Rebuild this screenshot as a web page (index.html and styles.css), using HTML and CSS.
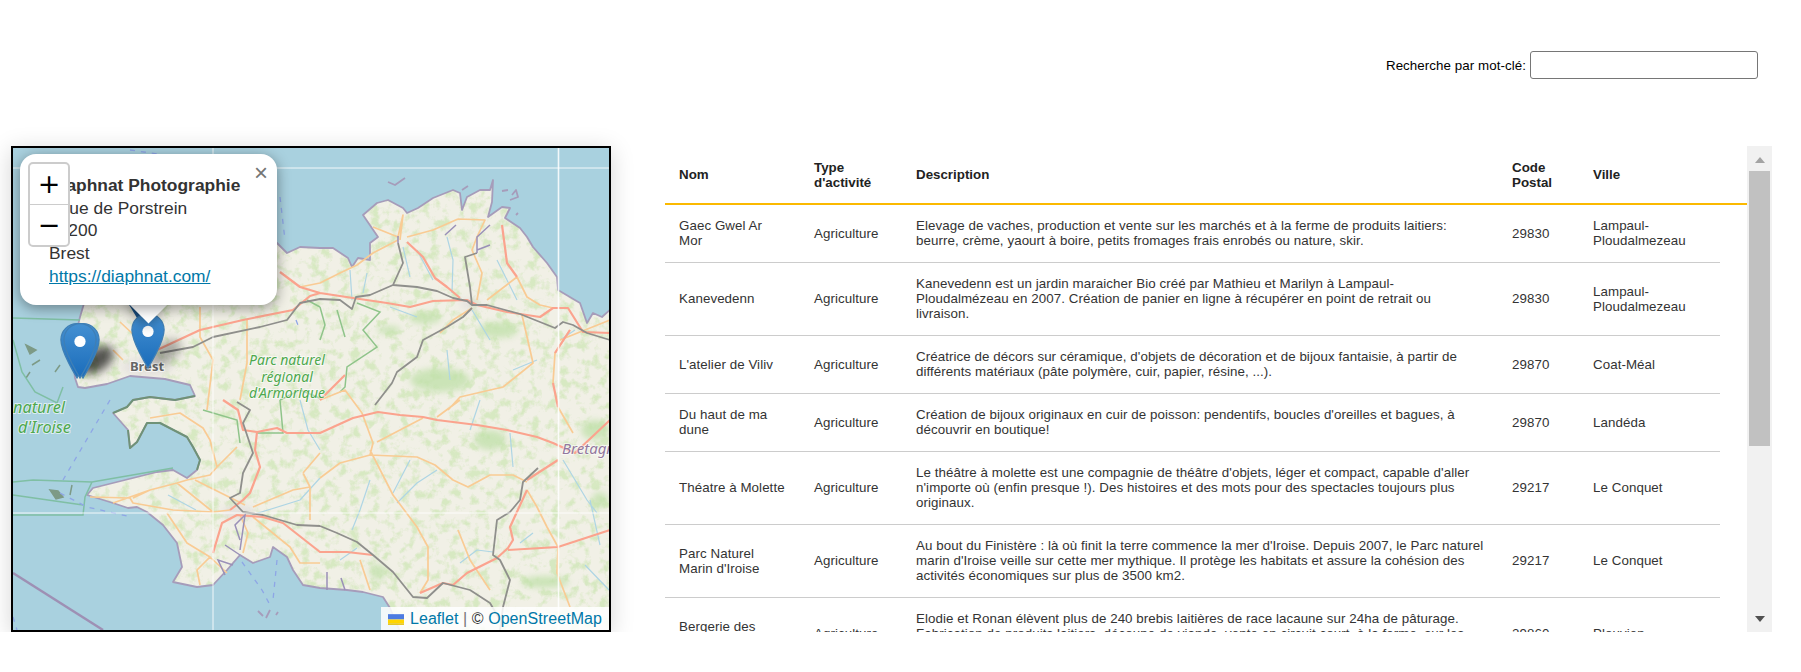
FILE: index.html
```html
<!DOCTYPE html>
<html lang="fr">
<head>
  <meta charset="UTF-8">
  <meta name="viewport" content="width=device-width, initial-scale=1.0">
  <title>Annuaire</title>
  <link rel="stylesheet" href="styles.css">
</head>
<body>

  <div class="search-bar">
    <label for="keyword">Recherche par mot-clé:</label>
    <input type="text" id="keyword">
  </div>

  <div class="content">

    <div class="map">
      <svg class="map-canvas" viewBox="13 148 596 482" width="596" height="482">
        <defs>
          <path id="land" d="M80 317 L85 300 L150 262 L230 240 L277 243 L287 253 L300 247 L320 248 L333 248 L348 258 L352 267 L358 258 L370 260 L370 243 L378 237 L363 215 L377 203 L388 200 L403 208 L407 213 L418 208 L433 198 L453 190 L460 193 L462 210 L467 197 L480 190 L490 190 L493 180 L492 202 L488 217 L502 207 L510 208 L505 218 L520 228 L527 237 L533 247 L547 263 L557 277 L558 290 L580 303 L587 323 L593 313 L602 317 L612 308 L612 634 L401 634 L390 608 L383 597 L363 592 L347 590 L320 588 L303 585 L293 570 L287 557 L273 547 L270 557 L253 563 L240 555 L227 570 L213 585 L197 587 L173 582 L182 567 L177 543 L163 525 L147 512 L137 507 L128 508 L113 503 L87 495 L93 488 L133 478 L157 472 L173 470 L187 478 L197 470 L200 460 L193 447 L187 437 L160 423 L147 423 L137 442 L130 448 L128 430 L113 413 L127 407 L133 400 L150 397 L175 400 L195 396 L190 385 L165 379 L130 376 L107 384 L85 388 L78 387 L75 378 L72 350 Z"/>
          <clipPath id="land-clip"><use href="#land"/></clipPath>
          <filter id="mottle" x="0" y="0" width="100%" height="100%" color-interpolation-filters="sRGB">
            <feTurbulence type="fractalNoise" baseFrequency=".1" numOctaves="4" seed="7"/>
            <feColorMatrix values="0 0 0 0 .80  0 0 0 0 .90  0 0 0 0 .70  0 0 0 4 -1.950"/>
          </filter>
          <linearGradient id="pin-fill" x1="0" y1="0" x2="0" y2="1">
            <stop offset="0" stop-color="#4490d2"/>
            <stop offset="1" stop-color="#1a6cba"/>
          </linearGradient>
          <g id="pin">
            <path class="pin-body" d="M12.5 .5C5.9 .5 .5 5.9 .5 12.5c0 9.4 12 28.5 12 28.5s12-19.1 12-28.5C24.5 5.9 19.100 .5 12.500 .5z"/>
            <circle class="pin-dot" cx="12.500" cy="13.800" r="4.200"/>
          </g>
        </defs>

        <g class="tiles">
          <rect class="sea" x="13" y="148" width="596" height="482"/>
          <use href="#land" class="land"/>
          <g clip-path="url(#land-clip)">
            <rect class="mottle" x="13" y="148" width="596" height="482" filter="url(#mottle)"/>
            <ellipse class="forest" cx="425" cy="318" rx="16" ry="6"/>
            <ellipse class="forest" cx="498" cy="330" rx="20" ry="8"/>
            <ellipse class="forest" cx="389" cy="330" rx="12" ry="4"/>
            <ellipse class="forest" cx="595" cy="430" rx="14" ry="10"/>
            <ellipse class="forest" cx="490" cy="440" rx="16" ry="10"/>
            <ellipse class="forest" cx="545" cy="582" rx="24" ry="6"/>
            <ellipse class="forest" cx="378" cy="572" rx="8" ry="8"/>
            <ellipse class="forest" cx="600" cy="500" rx="8" ry="8"/>
            <ellipse class="forest" cx="440" cy="380" rx="30" ry="12"/>
            <ellipse class="town" cx="147" cy="367" rx="26" ry="10"/>
            <ellipse class="town" cx="470" cy="304" rx="10" ry="6"/>
            <ellipse class="town" cx="238" cy="512" rx="16" ry="8"/>
          </g>

          <g class="shore">
            <use href="#land"/>
            <path d="M388 182 L395 185 L405 178 M462 190 L468 186 M502 191 L508 190 M512 195 L516 190 L518 197 L510 200 M516 215 L518 213 M258 611 L263 616 M266 618 L270 610 M278 612 L276 615"/>
          </g>
          <path class="shore-dark" d="M113 413 L127 407 L133 400 L150 397 L175 400 L195 396 M197 470 L200 460 L193 447 L187 437 L160 423 L147 423 L137 442 L130 448 L128 430"/>
          <path class="islands" d="M50 490 L58 491 L63 497 L56 499 Z M26 345 L36 350 L30 354 Z M40 360 L32 365 M60 365 L55 372 M30 372 L26 378 M70 495 L72 485"/>

          <path class="boundary" d="M13 318 L80 320 M13 340 L22 372 L35 392 L57 403 L63 387 M13 482 L33 480 L92 482 L173 468 M92 482 L85 497 L83 515 L13 515 M13 495 L83 505"/>
          <path class="dashed" d="M110 400 L63 480 M60 493 L87 507 L127 516 M280 197 L285 240 M130 150 L200 160 M13 617 L17 630 M242 562 L262 590 L270 605 M277 560 L273 600 M296 320 L300 330"/>
          <path class="frontier" d="M13 573 L103 630"/>

          <path class="river" d="M417 250 L433 280 M447 237 L453 260 L452 293 M367 273 L363 293 M403 247 L410 277 M472 310 L490 340 M447 350 L450 380 M513 370 L537 360 M390 307 L417 317 M410 460 L393 493 M437 470 L417 483 L397 503 M510 433 L513 467 M460 563 L477 550 L493 552 M563 460 L587 500 L597 513 M533 533 L520 543 M350 270 L352 300 M497 260 L512 290 L517 300 M300 400 L308 430 L320 450 M252 515 L300 500 L320 478 M560 340 L575 330 M590 500 L600 545 M370 480 L360 510 L352 530 M340 560 L357 548 M585 565 L609 590 M196 510 L168 495 M470 430 L480 400"/>
          <path class="boundary park" d="M320 307 L325 325 L320 340 M357 303 L380 312 L363 330 L377 347 L347 367 L345 387 L340 392 M337 310 L345 337 M203 410 L237 420 L240 443 M257 433 L283 433 L280 400 M307 300 L320 307 M280 400 L300 390 L320 398"/>

          <path class="road" d="M373 227 L398 237 L403 215 L400 240 M458 219 L433 230 L407 237 M458 219 L485 220 L477 237 L472 250 L482 273 L477 300 M517 277 L487 300 M398 240 L373 253 L357 265 L340 273 L320 283 L300 287 M472 308 L453 320 L440 333 M522 315 L533 363 L503 387 L460 397 L448 410 M570 330 L555 353 L553 383 M517 277 L527 297 L540 305 L553 308 M370 450 L393 495 L417 527 L428 547 L428 580 L420 593 M320 478 L340 463 L370 455 L417 457 L435 465 L453 480 L468 487 L490 475 L513 475 L527 482 M377 442 L400 430 L423 418 M362 413 L373 443 L370 455 M437 417 L460 400 M527 490 L537 507 L547 527 L558 547 L557 573 L570 607 M558 407 L573 433 M90 497 L130 498 L133 503 L173 510 L213 512 L230 510 M133 498 L150 490 L177 483 L187 480 L210 475 L217 467 L210 440 L203 428 L180 413 L150 418 M217 467 L237 447 M177 483 L213 512 M167 513 L187 543 L210 557 L197 570 L200 585 M210 557 L227 573 M240 515 L248 533 L243 553 M303 473 L310 487 L293 490 L253 507 M303 473 L320 453 M310 487 L310 520 M253 517 L290 547 L300 563 L320 563 M200 307 L200 337 L213 360 L207 410 M113 350 L123 360 M120 322 L150 350 M247 320 L247 363 L240 400 M320 400 L345 390 L362 413 M560 340 L610 320 M370 590 L360 560 M245 505 L195 480 M113 503 L150 490 M458 530 L470 560 L490 590"/>
          <path class="road major" d="M157 350 L200 330 L243 320 L293 310 L310 296 L320 293 L353 298 L387 303 L410 307 L433 301 L467 300 L477 305 L507 312 L540 317 L553 308 L568 308 L583 332 L610 333 M280 272 L300 287 L320 293 M407 242 L423 257 L435 278 L447 287 L460 298 M502 225 L507 263 L517 277 M570 330 L555 353 M553 383 L558 407 M223 400 L238 410 L243 430 L257 432 L277 428 L287 433 L320 433 L353 418 L378 412 L400 415 L423 417 L437 420 L477 425 L507 430 L537 437 L553 443 L575 453 L610 420 M558 460 L527 480 M527 490 L510 527 L513 540 L508 548 L497 558 L467 573 L453 585 L443 583 L420 593 M508 550 L558 547 L610 530 M257 432 L255 450 L260 467 L250 493 L243 500 L230 510 M213 553 L222 523 L237 515 L263 517 L283 523 L320 552 L347 552 L373 555 M320 400 L345 375"/>
          <path class="road grey" d="M160 353 L193 347 L213 337 L260 327 L287 320 L300 303 L320 299 L340 300 L352 309 L356 297 L370 295 L393 285 L417 287 L437 291 L453 298 L467 301 L472 305 L487 305 L520 314 L540 322 L555 328 L563 322 L573 325 L587 333 L610 340 M393 285 L403 263 L398 243 M472 305 L470 287 L465 257 L477 253 M472 308 L463 317 L447 327 L423 340 L417 357 L397 372 L392 383 L375 405 M320 526 L337 533 L357 542 L373 555 L393 572 L413 597 L427 598 L443 583 L470 590 L490 603 L500 620 M538 468 L523 482 L520 500 L510 512 L497 520 L493 555 L500 560 L510 580 L503 607 L500 630 M320 526 L297 525 L263 515 L243 512 L230 498 L240 493 L243 473 L253 453 L243 423 L250 410 L237 402"/>
          <path class="ria" d="M477 253 L477 237 L490 225 M477 250 L490 245 M398 243 L398 236 M456 225 L445 235 M240 540 L235 525 L245 515 L240 550 M225 545 L240 555 M233 565 L218 560 L225 575 M327 590 L327 572 M345 590 L341 578"/>

          <path class="seam" d="M213 148 L213 630 M13 168 L609 168 M13 513 L609 513"/>
          <path class="seam wide" d="M558.500 148 L558.500 630"/>
        </g>

        <g class="labels">
          <text class="label-park" x="287" y="365">Parc naturel</text>
          <text class="label-park" x="287" y="381.500">régional</text>
          <text class="label-park" x="287" y="397.500">d'Armorique</text>
          <text class="label-park label-left" x="13" y="413">naturel</text>
          <text class="label-park label-left" x="18" y="433">d'Iroise</text>
          <text class="label-city" x="147" y="371">Brest</text>
          <text class="label-region" x="562" y="454">Bretagne</text>
        </g>

        <path class="pin-hidden" d="M128 303 L141 303 L143 317 L137 318 Z"/>
        <ellipse class="pin-shadow soft" cx="165" cy="352" rx="18" ry="10" transform="rotate(-30 165 352)"/>
        <ellipse class="pin-shadow" cx="97" cy="360" rx="19" ry="11" transform="rotate(-35 97 360)"/>
        <use href="#pin" transform="translate(60.250 323) scale(1.340)"/>
        <use href="#pin" transform="translate(66.250 323) scale(1.340)"/>
        <use href="#pin" transform="translate(63.250 323) scale(1.340)"/>
        <use href="#pin" transform="translate(131.250 313) scale(1.340)"/>
      </svg>

      <div class="popup">
        <div class="popup-tip"></div>
        <div class="popup-body">
          <b>Diaphnat Photographie</b><br>
          1 rue de Porstrein<br>
          29200<br>
          Brest<br>
          <a href="#">https://diaphnat.com/</a>
        </div>
        <span class="popup-close">×</span>
      </div>

      <div class="zoom-control">
        <a href="#">+</a>
        <a href="#">−</a>
      </div>

      <div class="attribution">
        <svg class="flag" viewBox="0 0 12 8" width="16" height="11">
          <rect width="12" height="4" fill="#4C7BE1"/>
          <rect y="4" width="12" height="3" fill="#FFD500"/>
          <rect y="7" width="12" height="1" fill="#E0BC00"/>
        </svg><a href="#">Leaflet</a> <span class="sep">|</span> © <a href="#">OpenStreetMap</a>
      </div>
    </div>

    <div class="table-panel">
      <div class="table-scroll">
        <table>
          <colgroup>
            <col class="col-nom">
            <col class="col-type">
            <col class="col-desc">
            <col class="col-code">
            <col class="col-ville">
            <col class="col-gap">
          </colgroup>
          <thead>
            <tr>
              <th>Nom</th>
              <th>Type d'activité</th>
              <th>Description</th>
              <th>Code Postal</th>
              <th>Ville</th>
              <th></th>
            </tr>
          </thead>
          <tbody>
            <tr>
              <td>Gaec Gwel Ar Mor</td>
              <td>Agriculture</td>
              <td>Elevage de vaches, production et vente sur les marchés et à la ferme de produits laitiers: beurre, crème, yaourt à boire, petits fromages frais enrobés ou nature, skir.</td>
              <td>29830</td>
              <td>Lampaul-Ploudalmezeau</td>
            </tr>
            <tr>
              <td>Kanevedenn</td>
              <td>Agriculture</td>
              <td>Kanevedenn est un jardin maraicher Bio créé par Mathieu et Marilyn à Lampaul-Ploudalmézeau en 2007. Création de panier en ligne à récupérer en point de retrait ou livraison.</td>
              <td>29830</td>
              <td>Lampaul-Ploudalmezeau</td>
            </tr>
            <tr>
              <td>L'atelier de Viliv</td>
              <td>Agriculture</td>
              <td>Créatrice de décors sur céramique, d'objets de décoration et de bijoux fantaisie, à partir de différents matériaux (pâte polymère, cuir, papier, résine, ...).</td>
              <td>29870</td>
              <td>Coat-Méal</td>
            </tr>
            <tr>
              <td>Du haut de ma dune</td>
              <td>Agriculture</td>
              <td>Création de bijoux originaux en cuir de poisson: pendentifs, boucles d'oreilles et bagues, à découvrir en boutique!</td>
              <td>29870</td>
              <td>Landéda</td>
            </tr>
            <tr>
              <td>Théatre à Molette</td>
              <td>Agriculture</td>
              <td>Le théâtre à molette est une compagnie de théâtre d'objets, léger et compact, capable d'aller n'importe où (enfin presque !). Des histoires et des mots pour des spectacles toujours plus originaux.</td>
              <td>29217</td>
              <td>Le Conquet</td>
            </tr>
            <tr>
              <td>Parc Naturel Marin d'Iroise</td>
              <td>Agriculture</td>
              <td>Au bout du Finistère : là où finit la terre commence la mer d'Iroise. Depuis 2007, le Parc naturel marin d'Iroise veille sur cette mer mythique. Il protège les habitats et assure la cohésion des activités économiques sur plus de 3500 km2.</td>
              <td>29217</td>
              <td>Le Conquet</td>
            </tr>
            <tr>
              <td>Bergerie des Abers</td>
              <td>Agriculture</td>
              <td>Elodie et Ronan élèvent plus de 240 brebis laitières de race lacaune sur 24ha de pâturage. Fabrication de produits laitiers, découpe de viande, vente en circuit court, à la ferme, sur les marchés et en magasins de producteurs.</td>
              <td>29860</td>
              <td>Plouvien</td>
            </tr>
          </tbody>
        </table>
      </div>
      <div class="scrollbar">
        <span class="arrow-up"></span>
        <div class="scrollbar-track"><div class="scrollbar-thumb"></div></div>
        <span class="arrow-down"></span>
      </div>
    </div>

  </div>

</body>
</html>
```

FILE: styles.css
```css
body {
  margin: 0;
  background: #fff;
  font-family: "Liberation Sans", Arial, sans-serif;
  overflow: hidden;
}

/* search */
.search-bar {
  display: flex;
  justify-content: flex-end;
  align-items: center;
  gap: 4px;
  padding: 51px 43px 67px 0;
  font-size: 13.33px;
  letter-spacing: 0.07px;
  color: #000;
}

.search-bar input {
  width: 228px;
  height: 28px;
  box-sizing: border-box;
  border: 1px solid #767676;
  border-radius: 3px;
  padding: 0;
  background: #fff;
}

.content {
  display: flex;
  gap: 54px;
  padding-left: 11px;
}

/* map */
.map {
  position: relative;
  width: 600px;
  height: 486px;
  box-sizing: border-box;
  border: 2px solid #000;
  box-shadow: 0 4px 22px rgba(0, 0, 0, 0.17);
  overflow: hidden;
  background: #aad3df;
}

.map-canvas {
  display: block;
}

.tiles {
  filter: blur(0.6px);
}

.sea { fill: #a9d1df; }
.land { fill: #f1f0e6; }
.mottle { opacity: 0.7; }
.forest { fill: #bfe0a8; opacity: 0.75; filter: blur(3px); }
.town { fill: #e4e0de; opacity: 0.8; filter: blur(3px); }

.shore { fill: none; stroke: #a69cba; stroke-width: 1.8; stroke-linejoin: round; }
.shore-dark { fill: none; stroke: #6f9277; stroke-width: 2; stroke-linejoin: round; }
.islands { fill: #7d9a86; stroke: #7d9a86; stroke-width: 1.5; }

.boundary { fill: none; stroke: #7fbfa4; stroke-width: 1.5; }
.boundary.park { stroke: #8fc48a; }
.dashed { fill: none; stroke: #8ea6e6; stroke-width: 1.3; stroke-dasharray: 5 6; }
.frontier { fill: none; stroke: #9e90b4; stroke-width: 2.5; }
.river { fill: none; stroke: #aed5e4; stroke-width: 1.2; stroke-linejoin: round; }

.road { fill: none; stroke: #f9cb94; stroke-width: 1.7; stroke-linejoin: round; }
.road.major { stroke: #fba38e; stroke-width: 2.2; }
.road.grey { stroke: #8f8f8c; stroke-width: 1.8; }
.ria { fill: none; stroke: #9a90b8; stroke-width: 1.5; }
.seam { fill: none; stroke: #fff; stroke-width: 1; opacity: 0.85; }
.seam.wide { stroke-width: 1.6; }

.labels text {
  paint-order: stroke;
  stroke: rgba(255, 255, 255, 0.6);
  stroke-width: 2px;
  text-anchor: middle;
  font-family: "Noto Sans", sans-serif;
  font-style: italic;
}

.labels .label-park { font-size: 14px; fill: #4ea84e; }
.labels .label-left { font-size: 16.3px; text-anchor: start; }
.labels .label-city { font-size: 13px; font-style: normal; font-weight: bold; fill: #666; stroke: rgba(255, 255, 255, 0.8); }
.labels .label-region { font-size: 15px; fill: #93789e; text-anchor: start; }

.pin-body { fill: url(#pin-fill); stroke: #3f7fb5; stroke-width: 1; }
.pin-dot { fill: #fff; }
.pin-hidden { fill: #1d5a94; }
.pin-shadow { fill: rgba(0, 0, 0, 0.65); filter: blur(5px); }
.pin-shadow.soft { fill: rgba(0, 0, 0, 0.3); }

/* popup */
.popup {
  position: absolute;
  left: 7px;
  top: 6px;
  width: 257px;
  height: 151px;
  font-size: 17.4px;
  line-height: 1.3;
  color: #333;
}

.popup-body {
  position: relative;
  height: 100%;
  box-sizing: border-box;
  padding: 20px 0 0 29px;
  background: #fff;
  border-radius: 16px;
  box-shadow: 0 3px 14px rgba(0, 0, 0, 0.4);
  white-space: nowrap;
}

.popup a {
  color: #0078a8;
}

.popup-tip {
  position: absolute;
  left: 115px;
  top: 137px;
  width: 27px;
  height: 27px;
  background: #fff;
  transform: rotate(45deg);
  box-shadow: 0 3px 14px rgba(0, 0, 0, 0.4);
}

.popup-close {
  position: absolute;
  top: 7px;
  right: 9px;
  font-size: 24px;
  line-height: 24px;
  color: #757575;
}

/* zoom buttons */
.zoom-control {
  position: absolute;
  left: 15px;
  top: 14px;
  width: 42px;
  box-sizing: border-box;
  border: 2px solid #ccc;
  border-radius: 5px;
  background: #fff;
  overflow: hidden;
}

.zoom-control a {
  display: block;
  height: 40px;
  line-height: 40px;
  text-align: center;
  text-decoration: none;
  font-family: "DejaVu Sans", sans-serif;
  font-size: 27px;
  color: #000;
}

.zoom-control a:first-child {
  border-bottom: 1px solid #ccc;
}

/* attribution */
.attribution {
  position: absolute;
  right: 0;
  bottom: 0;
  height: 23px;
  line-height: 23px;
  padding: 0 7px;
  white-space: nowrap;
  background: rgba(255, 255, 255, 0.85);
  font-size: 16px;
  letter-spacing: 0.07px;
  color: #333;
}

.attribution a {
  color: #0078a8;
  text-decoration: none;
}

.flag {
  margin-right: 6px;
  vertical-align: -1px;
}

.sep {
  color: #777;
}

/* table */
.table-panel {
  display: flex;
  width: 1107px;
  height: 486px;
}

.table-scroll {
  flex: 1;
  overflow: hidden;
}

table {
  width: 1082px;
  table-layout: fixed;
  border-collapse: separate;
  border-spacing: 0;
  font-size: 13.33px;
  line-height: 15px;
  color: #333;
}

.col-nom { width: 135px; }
.col-type { width: 102px; }
.col-desc { width: 596px; }
.col-code { width: 81px; }
.col-ville { width: 141px; }
.col-gap { width: 27px; }

th {
  padding: 13.5px 14px;
  text-align: left;
  color: #222;
  border-bottom: 2px solid #fbb900;
}

td {
  padding: 13px 14px 14px;
  border-bottom: 1px solid #ccc;
  letter-spacing: 0.07px;
}

/* scrollbar */
.scrollbar {
  width: 25px;
  display: flex;
  flex-direction: column;
  align-items: center;
  background: #f1f1f1;
}

.arrow-up,
.arrow-down {
  flex: none;
  width: 0;
  height: 0;
  border-left: 5.5px solid transparent;
  border-right: 5.5px solid transparent;
}

.arrow-up {
  margin: 11px 0 8px;
  border-bottom: 6px solid #a3a3a3;
}

.arrow-down {
  margin: 9px 0 10px;
  border-top: 6px solid #505050;
}

.scrollbar-track {
  flex: 1;
  width: 21px;
}

.scrollbar-thumb {
  height: 275px;
  background: #c1c1c1;
}
```
